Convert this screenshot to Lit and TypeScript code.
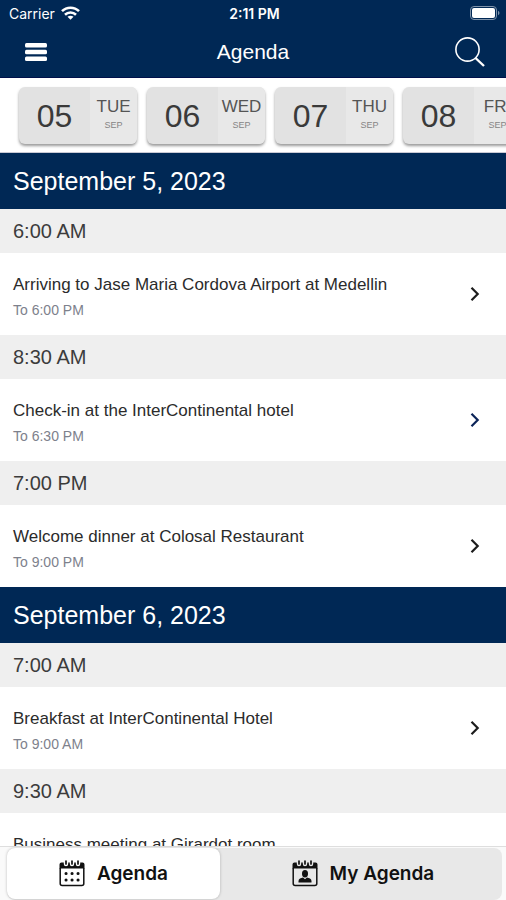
import { LitElement, html, css, svg } from "lit";
import { customElement, property, state } from "lit/decorators.js";
import { classMap } from "lit/directives/class-map.js";

interface Session {
  start: string;
  title: string;
  end: string;
  highlighted?: boolean;
}

interface Day {
  date: string;
  sessions: Session[];
}

const CHIPS = [
  { day: "05", weekday: "TUE", month: "SEP" },
  { day: "06", weekday: "WED", month: "SEP" },
  { day: "07", weekday: "THU", month: "SEP" },
  { day: "08", weekday: "FRI", month: "SEP" },
];

const DAYS: Day[] = [
  {
    date: "September 5, 2023",
    sessions: [
      { start: "6:00 AM", title: "Arriving to Jase Maria Cordova Airport at Medellin", end: "To 6:00 PM" },
      { start: "8:30 AM", title: "Check-in at the InterContinental hotel", end: "To 6:30 PM", highlighted: true },
      { start: "7:00 PM", title: "Welcome dinner at Colosal Restaurant", end: "To 9:00 PM" },
    ],
  },
  {
    date: "September 6, 2023",
    sessions: [
      { start: "7:00 AM", title: "Breakfast at InterContinental Hotel", end: "To 9:00 AM" },
      { start: "9:30 AM", title: "Business meeting at Girardot room", end: "To 11:00 AM" },
    ],
  },
];

const calendarFrame = svg`
  <path d="M1.200 8V23.500a2 2 0 0 0 2 2h19.600a2 2 0 0 0 2-2V8" fill="none" stroke="currentColor" stroke-width="1.500"/>
  <path d="M0.500 8.500V4.500a2 2 0 0 1 2-2H4.800v1.500a2.200 2.200 0 0 0 4.400 0v-1.500h1.600v1.500a2.200 2.200 0 0 0 4.400 0v-1.500h1.600v1.500a2.200 2.200 0 0 0 4.400 0v-1.500h2.300a2 2 0 0 1 2 2V8.500z" fill="currentColor"/>
  <path d="M7 1v3M13 1v3M19 1v3" stroke="currentColor" stroke-width="1.700" stroke-linecap="round"/>`;

@customElement("session-row")
export class SessionRow extends LitElement {
  @property({ attribute: false }) session!: Session;

  static styles = css`
    :host { display: block; }
    .time {
      margin: 0;
      padding: 0 13px;
      background: #efefef;
      color: #3c3c3c;
      font-size: 20px;
      font-weight: 400;
      line-height: 44px;
    }
    .row {
      display: flex;
      align-items: center;
      justify-content: space-between;
      width: 100%;
      height: 82px;
      padding: 0 24px 0 13px;
      border: 0;
      background: #fff;
      font: inherit;
      text-align: left;
      cursor: pointer;
    }
    .text { display: flex; flex-direction: column; padding-top: 5px; }
    .title { color: #2b2b2b; font-size: 17px; line-height: 26px; }
    .end { color: #7d818c; font-size: 14px; line-height: 24px; }
    .chevron { flex: none; color: #1c1c1c; }
    .highlighted { color: #0b2458; }
  `;

  render() {
    const s = this.session;
    return html`
      <h3 class="time">${s.start}</h3>
      <button class="row">
        <span class="text">
          <span class="title">${s.title}</span>
          <span class="end">${s.end}</span>
        </span>
        <svg class=${classMap({ chevron: true, highlighted: !!s.highlighted })} width="14" height="16" viewBox="0 0 14 16" aria-hidden="true">
          <path d="M3.500 1.800L9.700 8L3.500 14.200" fill="none" stroke="currentColor" stroke-width="2.200"/>
        </svg>
      </button>`;
  }
}

@customElement("app-root")
export class AppRoot extends LitElement {
  @state() private tab: "all" | "mine" = "all";

  static styles = css`
    :host {
      display: flex;
      flex-direction: column;
      height: 100vh;
      overflow: hidden;
      background: #fff;
      font-family: "Liberation Sans", Arial, sans-serif;
    }
    * { box-sizing: border-box; }
    .top { flex: none; background: #002855; color: #fff; border-bottom: 1px solid #00104a; }
    .status, .bar {
      display: grid;
      grid-template-columns: 1fr auto 1fr;
      align-items: center;
    }
    .status { height: 26px; padding: 0 6px 0 9px; font-family: Inter, sans-serif; font-size: 14px; }
    .carrier { display: flex; align-items: center; gap: 6px; }
    .clock { font-weight: 600; }
    .end { justify-self: end; }
    .bar { height: 51px; padding: 0 20px; }
    .heading { margin: 0; font-size: 21px; font-weight: 400; }
    .icon {
      display: flex;
      align-items: center;
      justify-content: center;
      width: 32px;
      height: 40px;
      padding: 0;
      border: 0;
      background: none;
      color: inherit;
      cursor: pointer;
    }
    .days {
      display: flex;
      flex: none;
      align-items: center;
      gap: 10px;
      height: 75px;
      padding: 0 19px;
      border-bottom: 1px solid #c9c9d4;
      overflow: hidden;
    }
    .chip {
      display: flex;
      flex: none;
      width: 118px;
      height: 57px;
      padding: 0;
      border: 0;
      border-radius: 6px;
      overflow: hidden;
      background: #e2e2e2;
      box-shadow: 0 2px 3px rgba(0, 0, 0, 0.4);
      font: inherit;
      color: #3a3a3a;
      cursor: pointer;
    }
    .number { width: 71px; font-size: 32px; line-height: 58px; }
    .when {
      display: flex;
      flex: 1;
      flex-direction: column;
      align-items: center;
      justify-content: center;
      height: 100%;
      background: #e8e8e8;
      color: #555;
    }
    .weekday { font-size: 17px; line-height: 20px; }
    .month { color: #858585; font-size: 9px; line-height: 16px; }
    .list { flex: 1; min-height: 0; overflow-y: auto; scrollbar-width: none; }
    .date {
      margin: 0;
      padding: 0 13px;
      background: #002855;
      color: #fff;
      font-size: 25px;
      font-weight: 400;
      line-height: 56px;
    }
    .tabs { flex: none; padding: 1px 4px 0 7px; border-top: 1px solid #dedede; background: #fafafa; }
    .track { display: flex; height: 52px; border-radius: 8px; background: #e8e8e8; }
    .tab {
      display: flex;
      flex: 281;
      align-items: center;
      justify-content: center;
      gap: 12px;
      height: 51px;
      padding: 0 0 0 4px;
      border: 0;
      border-radius: 8px;
      background: none;
      color: #111;
      font-family: Inter, sans-serif;
      font-size: 19px;
      font-weight: 600;
      cursor: pointer;
    }
    .first { flex: 215; padding: 0; }
    .active { background: #fff; box-shadow: 0 0 3px rgba(0, 0, 0, 0.25); }
  `;

  render() {
    return html`
      <header class="top">
        <div class="status">
          <span class="carrier">Carrier
            <svg width="19" height="14" viewBox="0 0 19 14" fill="none" stroke="currentColor" stroke-width="2.600" aria-hidden="true">
              <path d="M1 5.200C5.700 0.500 13.300 0.500 18 5.200"/>
              <path d="M4 8.700C7 5.800 12 5.800 15 8.700"/>
              <path d="M9.500 13.800L6.500 10.800C8.200 9.300 10.800 9.300 12.500 10.800Z" fill="currentColor" stroke="none"/>
            </svg>
          </span>
          <span class="clock">2:11 PM</span>
          <svg class="end" width="30" height="14" viewBox="0 0 30 14" aria-hidden="true">
            <rect x="0.500" y="0.500" width="26" height="13" rx="3.500" fill="none" stroke="#7f93aa"/>
            <rect x="2" y="2" width="23" height="10" rx="2" fill="#fff"/>
            <path d="M28 4.800c2 1 2 3.400 0 4.400z" fill="#7f93aa"/>
          </svg>
        </div>
        <div class="bar">
          <button class="icon" aria-label="Menu">
            <svg width="24" height="20" viewBox="0 0 24 20" fill="currentColor">
              <rect x="1" y="1" width="22" height="4.600" rx="1.500"/>
              <rect x="1" y="7.700" width="22" height="4.600" rx="1.500"/>
              <rect x="1" y="14.400" width="22" height="4.600" rx="1.500"/>
            </svg>
          </button>
          <h1 class="heading">Agenda</h1>
          <button class="icon end" aria-label="Search">
            <svg width="32" height="32" viewBox="0 0 32 32" fill="none" stroke="currentColor">
              <circle cx="13.500" cy="13.500" r="11.600" stroke-width="1.600"/>
              <path d="M21.500 22L30 30" stroke-width="2.400"/>
            </svg>
          </button>
        </div>
      </header>
      <nav class="days" aria-label="Days">
        ${CHIPS.map(
          (c) => html`<button class="chip">
            <span class="number">${c.day}</span>
            <span class="when"><span class="weekday">${c.weekday}</span><span class="month">${c.month}</span></span>
          </button>`,
        )}
      </nav>
      <main class="list">
        ${DAYS.map(
          (d) => html`<section>
            <h2 class="date">${d.date}</h2>
            ${d.sessions.map((s) => html`<session-row .session=${s}></session-row>`)}
          </section>`,
        )}
      </main>
      <footer class="tabs">
        <div class="track">
          <button class=${classMap({ tab: true, first: true, active: this.tab === "all" })} @click=${() => (this.tab = "all")}>
            <svg width="26" height="27" viewBox="0 0 26 27" aria-hidden="true">
              ${calendarFrame}
              <path d="M7 13.500h.1M13 13.500h.1M19 13.500h.1M7 20h.1M13 20h.1M19 20h.1" stroke="currentColor" stroke-width="3" stroke-linecap="round"/>
            </svg>
            Agenda
          </button>
          <button class=${classMap({ tab: true, active: this.tab === "mine" })} @click=${() => (this.tab = "mine")}>
            <svg width="26" height="27" viewBox="0 0 26 27" aria-hidden="true">
              ${calendarFrame}
              <ellipse cx="13" cy="13.700" rx="3" ry="3.700" fill="currentColor"/>
              <path d="M6.500 22.500v-1.500c0-2 2.500-3 4.500-3.400l2 1.700l2-1.700c2 .4 4.500 1.400 4.500 3.400v1.500z" fill="currentColor"/>
            </svg>
            My Agenda
          </button>
        </div>
      </footer>`;
  }
}
